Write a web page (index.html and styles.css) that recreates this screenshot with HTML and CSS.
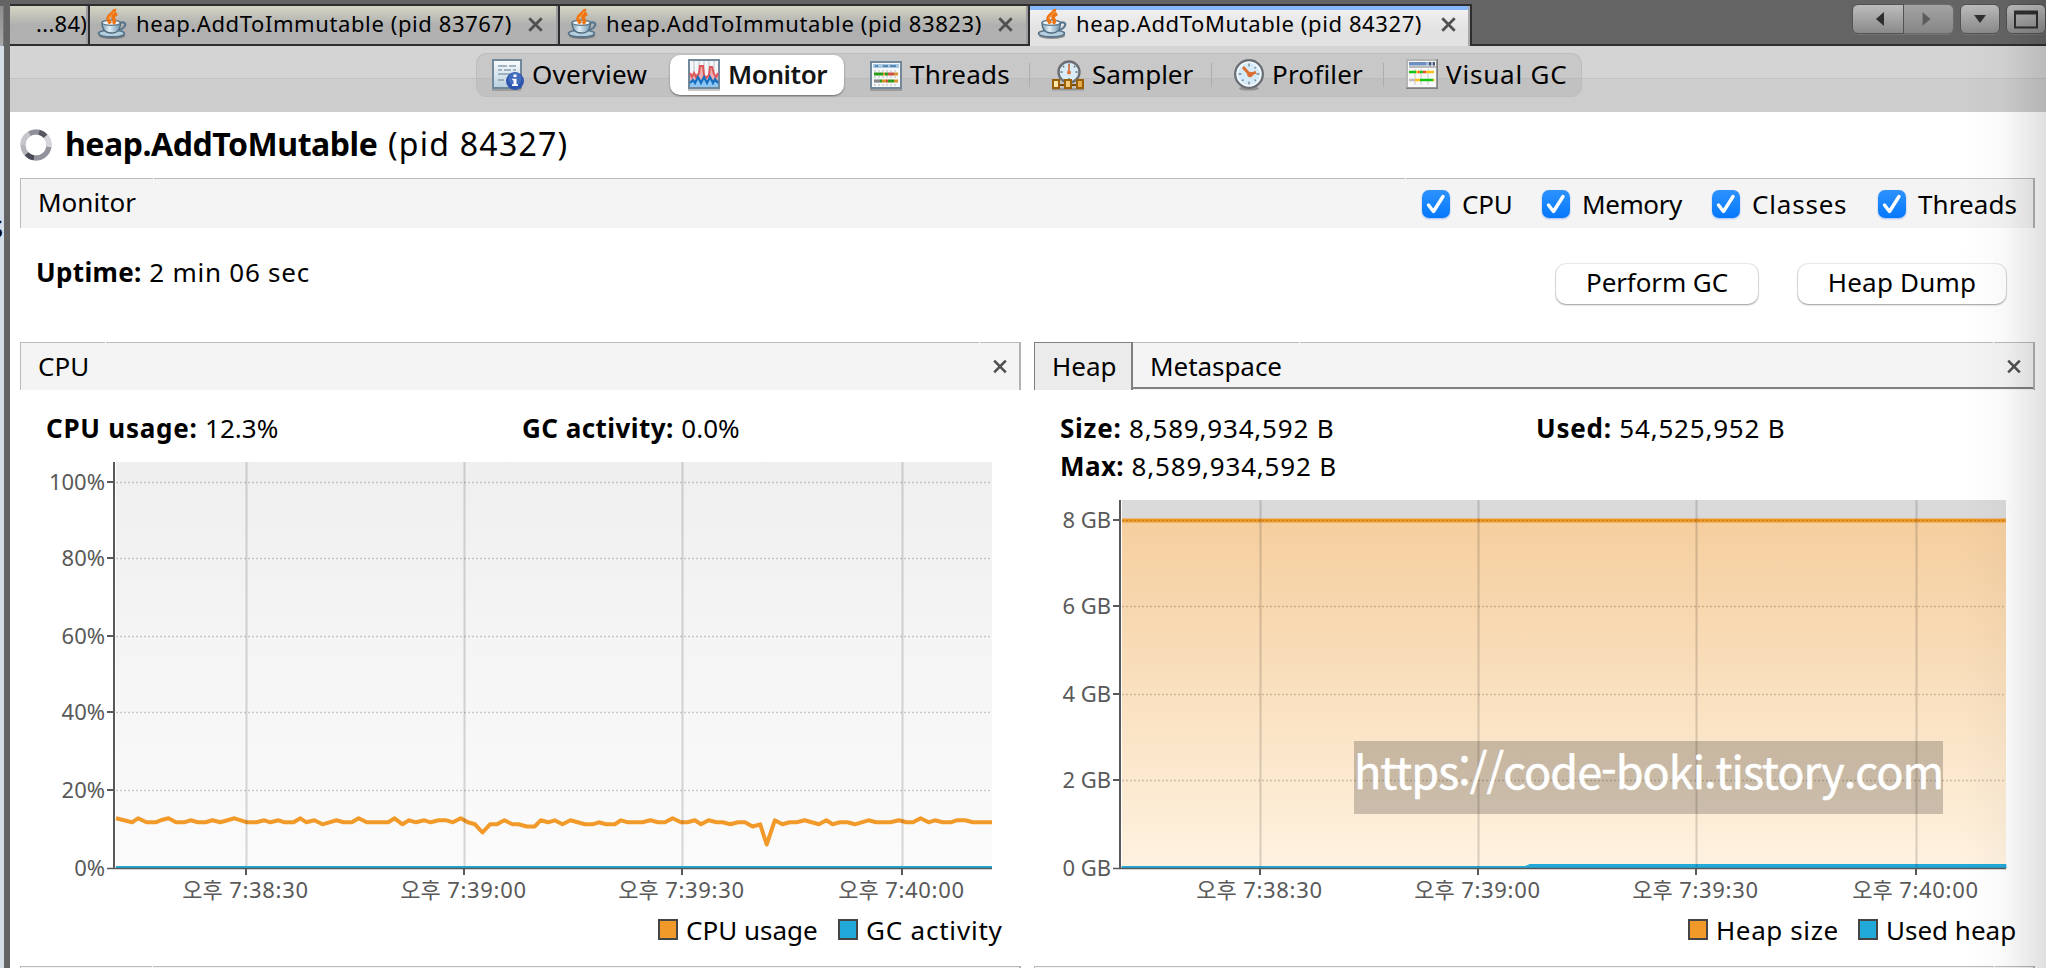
FILE: index.html
```
<!DOCTYPE html>
<html lang="ko">
<head>
<meta charset="utf-8">
<title>VisualVM</title>
<link rel="stylesheet" href="styles.css">
</head>
<body>
<svg class="defs" width="0" height="0" aria-hidden="true">
  <defs>
    <linearGradient id="cup" x1="0" y1="0" x2="1" y2="0">
      <stop offset="0" stop-color="#7f9db2"/><stop offset=".4" stop-color="#e0eef6"/><stop offset="1" stop-color="#6f93ab"/>
    </linearGradient>
    <linearGradient id="doc" x1="0" y1="0" x2="0" y2="1">
      <stop offset="0" stop-color="#fbfdfe"/><stop offset="1" stop-color="#b9cfdf"/>
    </linearGradient>
    <linearGradient id="cpuBg" x1="0" y1="0" x2="0" y2="1">
      <stop offset="0" stop-color="#efefef"/><stop offset="1" stop-color="#fbfbfb"/>
    </linearGradient>
    <linearGradient id="heapFill" x1="0" y1="0" x2="0" y2="1">
      <stop offset="0" stop-color="#f5ce9e"/><stop offset="1" stop-color="#fef2e0"/>
    </linearGradient>
    <linearGradient id="gold" x1="0" y1="0" x2="1" y2="0">
      <stop offset="0" stop-color="#fff0b8"/><stop offset="1" stop-color="#e2a640"/>
    </linearGradient>
    <symbol id="java" viewBox="0 0 30 32">
      <ellipse cx="15" cy="27.800" rx="13" ry="3.200" fill="#444" opacity=".5"/>
      <ellipse cx="14.500" cy="25.500" rx="13" ry="3.400" fill="#b5cedd" stroke="#567389" stroke-width="1.600"/>
      <path d="M22 15.500c5-2.500 7.500 0 5.500 3-1.200 2-3.500 3.200-7 3.500" fill="none" stroke="#5a7890" stroke-width="2.200"/>
      <path d="M5 14.500c0 5.500 2 10.500 9.500 10.500s9-5 9-10.500z" fill="url(#cup)" stroke="#4f6b80" stroke-width="1.300"/>
      <ellipse cx="14.200" cy="14.800" rx="9" ry="2.600" fill="#f0f6fa" stroke="#5d7a8f" stroke-width="1.200"/>
      <path d="M17.500 1c1 4-7 5.500-6.500 10 .2 1.800 1.500 3 2.500 4.500M20 5.500c-4 2.500-5 4-2.800 6.300 1 1.200.2 2.700-1.500 3.700" fill="none" stroke="#ee7413" stroke-width="3.500"/>
      <path d="M17 3.500c0 3-5.500 4.500-5 7.500" fill="none" stroke="#ffb15c" stroke-width="1"/>
    </symbol>
    <symbol id="close" viewBox="0 0 14 14">
      <path d="M1.200 1.200 12.800 12.800M12.800 1.200 1.200 12.800" stroke="#505050" stroke-width="2.600" fill="none"/>
    </symbol>
    <symbol id="check" viewBox="0 0 28 28">
      <path d="M6.500 15l5 6.500L21 6.500" stroke="#fff" stroke-width="3.400" stroke-linecap="round" stroke-linejoin="round" fill="none"/>
    </symbol>
  </defs>
</svg>

<div class="app">
  <aside class="edge"><div class="edge-tab"></div><div class="edge-body"><span>s</span></div></aside>

  <main class="window">
    <header class="tabs">
      <div class="tab tab-cut"><span>...84)</span></div>
      <div class="tab tab-wide"><svg class="java"><use href="#java"/></svg><span>heap.AddToImmutable (pid 83767)</span><svg class="x"><use href="#close"/></svg></div>
      <div class="tab tab-wide"><svg class="java"><use href="#java"/></svg><span>heap.AddToImmutable (pid 83823)</span><svg class="x"><use href="#close"/></svg></div>
      <div class="tab tab-active"><svg class="java"><use href="#java"/></svg><span>heap.AddToMutable (pid 84327)</span><svg class="x"><use href="#close"/></svg></div>
      <div class="tab-rest">
        <div class="nav">
          <div class="pair">
            <button class="nb left"><svg viewBox="0 0 50 28"><path d="M31 7v14L23 14z" fill="#2e2e2e"/></svg></button>
            <button class="nb right"><svg viewBox="0 0 50 28"><path d="M19 7v14l8-7z" fill="#5c5c5c"/></svg></button>
          </div>
          <button class="nb drop"><svg viewBox="0 0 38 28"><path d="M13 10h12l-6 8z" fill="#2e2e2e"/></svg></button>
          <button class="nb max"><svg viewBox="0 0 38 28"><path d="M8 7.500h22v15H8z" fill="none" stroke="#2e2e2e" stroke-width="2"/><path d="M7 5.500h24v4H7z" fill="#2e2e2e"/></svg></button>
        </div>
      </div>
    </header>

    <nav class="toolbar">
      <div class="segments">
        <div class="seg overview">
          <svg viewBox="0 0 32 32">
            <path d="M0 30h29v2H0z" fill="#777" opacity=".5"/>
            <path d="M1 1h28v28H1z" fill="url(#doc)" stroke="#71879a" stroke-width="2"/>
            <path d="M6 7h9M17 7h7M6 11h4M12 11h7M21 11h3M6 15h12M20 15h4M6 21h6" stroke="#8b9eae" stroke-width="1.600"/>
            <circle cx="23" cy="22" r="9" fill="#2d57ae"/><circle cx="23" cy="20" r="6.500" fill="#5078c8" opacity=".65"/>
            <path d="M21.500 15.500h3v2.600h-3zM20.300 19.700h4.200v5.600H26V27h-6v-1.700h1.500v-4h-1.200z" fill="#fff"/>
          </svg>Overview</div>
        <div class="seg monitor">
          <svg viewBox="0 0 32 32">
            <path d="M0 30h32v2H0z" fill="#999" opacity=".55"/>
            <path d="M1 1h30v28H1z" fill="#f4f6f9" stroke="#71879a" stroke-width="2"/>
            <path d="M6 2v24M11 2v24M16 2v24M21 2v24M26 2v24" stroke="#cdd3d9" stroke-width="1.500"/>
            <path d="M2 28V14l3 4 3-4 2 4 2-9 2-2 2 9 3 3 3-10 3 1 2 8 3-2v12z" fill="#eeb0b0"/>
            <path d="M2 14l2 4 2-4 2 4 3-4 1-7h3l1 9 2 3 3-3 1-8h2l2 7 2 3 2-4" fill="none" stroke="#de555a" stroke-width="2"/>
            <path d="M2 28v-5l3-3 3 2 2-4 4 4 3-4 2 5 3-5 3 4 2-2 3 3v5z" fill="#8fc8f4"/>
            <path d="M2 24l3-3 2 3 3-6 3 6 3-6 3 6 3-6 3 6 2-4 3 4" fill="none" stroke="#176fc0" stroke-width="2.200"/>
          </svg>Monitor</div>
        <div class="seg threads">
          <svg viewBox="0 0 32 32">
            <path d="M0 30h32v2H0z" fill="#777" opacity=".5"/>
            <path d="M1 3h30v26H1z" fill="#f5f7f8" stroke="#71879a" stroke-width="2"/>
            <path d="M3 5h26v4H3z" fill="#a8c8e2"/><path d="M5 7h3M13 7h5M20 7h6" stroke="#3a76a8" stroke-width="1.400"/>
            <path d="M4 12h24M4 18h24M4 26h24" stroke="#bbb" stroke-width="1" stroke-dasharray="2 2"/>
            <path d="M4 15h9M15 15h3M10 22h2M18 22h6" stroke="#2c9a1c" stroke-width="3.200"/>
            <path d="M13 15h2M24 15h4M12 22h4M24 22h4" stroke="#d3932a" stroke-width="3.200"/>
            <path d="M18 15h6M16 22h2" stroke="#cc4e40" stroke-width="3.200"/><path d="M4 22h6" stroke="#888" stroke-width="3.200"/>
          </svg>Threads</div>
        <div class="seg sampler">
          <svg viewBox="0 0 32 32">
            <circle cx="17" cy="13" r="10.500" fill="#d8ebf7" stroke="#6b6f74" stroke-width="2.400"/>
            <path d="M17 4.500v2M17 19v2M8.500 13h2M23.500 13h2M11 7l1.200 1.200M23 7l-1.200 1.200" stroke="#5d6d7a" stroke-width="1.300"/>
            <path d="M17 5.500v8" stroke="#d8662a" stroke-width="1.600"/><circle cx="17" cy="13.500" r="2" fill="#e0723a"/>
            <path d="M0 29h32v2.500H0z" fill="#555" opacity=".4"/>
            <path d="M1 21h6v8H1zM13 21h6v8h-6zM25 21h6v8h-6z" fill="url(#gold)" stroke="#9a5e07" stroke-width="2"/>
            <path d="M8 26h4M20 26h4" stroke="#7d4b04" stroke-width="2"/>
          </svg>Sampler</div>
        <div class="seg profiler">
          <svg viewBox="0 0 32 32">
            <ellipse cx="17" cy="29.500" rx="10" ry="2" fill="#555" opacity=".45"/>
            <circle cx="17" cy="15" r="13.800" fill="#d6ebf9" stroke="#6b6f74" stroke-width="2.400"/>
            <circle cx="17" cy="15" r="11.700" fill="none" stroke="#f5fbff" stroke-width="1.500"/>
            <path d="M17 4.500v3M17 22.500v3M6.500 15h3M24.500 15h3M24 22l-1.500-1.500M10 22l1.500-1.500M24 8l-1.500 1.500" stroke="#7b8c9a" stroke-width="1.400"/>
            <path d="M11 8l7 8 6-3" fill="none" stroke="#dd6d32" stroke-width="3"/><circle cx="18" cy="15.500" r="2.800" fill="#dd6d32"/>
          </svg>Profiler</div>
        <div class="seg vgc">
          <svg viewBox="0 0 32 32">
            <path d="M0 0h32v30H0z" fill="#808080"/><path d="M0 0h30.500v28.500H0z" fill="#b5b5b5"/><path d="M2 2h28v26H2z" fill="#f8f8f8"/>
            <path d="M3 3h17v3.500H3z" fill="#6d8fc0"/><path d="M20 3h9v3.500h-9z" fill="#9fb6d8"/><path d="M23 3h2v3.500h-2zM27 3h2v3.500h-2z" fill="#4c5768"/><path d="M3 7h27v2H3z" fill="#bbb"/>
            <path d="M9 10v16M15 10v16M22 10v16" stroke="#ddd" stroke-width="1.600"/>
            <path d="M3 13h7M14 13h3M14 21h13" stroke="#16c416" stroke-width="2.400"/><path d="M10 13h4M20 13h8M9 21h5M27 21h1.500" stroke="#f8c21a" stroke-width="2.400"/>
            <path d="M12 13h1.500M17 13h3" stroke="#f04a3a" stroke-width="2.400"/><path d="M3 21h6" stroke="#bbb" stroke-width="2.400"/>
          </svg>Visual GC</div>
      </div>
    </nav>

    <section class="content">
      <h1 class="title">
        <svg class="spinner" viewBox="0 0 32 32" fill="none" stroke-width="5">
          <circle cx="16" cy="16" r="13" stroke="#b4b5bb"/>
          <path d="M3 16A13 13 0 0 1 9.500 4.700" stroke="#c6c7cb"/>
          <path d="M9.500 4.700A13 13 0 0 1 19 3.300" stroke="#8f9099"/>
          <path d="M19 3.300A13 13 0 0 1 25.700 7.300" stroke="#56575f"/>
          <path d="M25.700 7.300A13 13 0 0 1 28.900 18" stroke="#d5d5d9"/>
          <path d="M28.900 18A13 13 0 0 1 14 28.900" stroke="#92939c"/>
          <path d="M14 28.900A13 13 0 0 1 6.500 24.900" stroke="#484a54"/>
        </svg>
        <b>heap.AddToMutable</b><span>(pid 84327)</span>
      </h1>

      <div class="bar monitor-bar">
        <span class="bar-name">Monitor</span>
        <div class="checks">
          <label class="c1"><i><svg><use href="#check"/></svg></i>CPU</label>
          <label class="c2"><i><svg><use href="#check"/></svg></i>Memory</label>
          <label class="c3"><i><svg><use href="#check"/></svg></i><span class="ls8">Classes</span></label>
          <label class="c4"><i><svg><use href="#check"/></svg></i>Threads</label>
        </div>
      </div>

      <div class="actions">
        <p class="uptime"><b>Uptime:</b> <span>2 min 06 sec</span></p>
        <button class="btn gc">Perform GC</button>
        <button class="btn dump">Heap Dump</button>
      </div>

      <div class="panels">
        <article class="panel">
          <div class="bar head cpu-head"><span class="bar-name">CPU</span><svg class="x"><use href="#close"/></svg></div>
          <div class="stats cpu-stats">
            <p><b>CPU usage:</b> <span class="ls0">12.3%</span></p><p class="gc-stat"><b>GC activity:</b> <span class="ls0">0.0%</span></p>
          </div>
          <svg class="chart" width="1001" height="458" viewBox="20 447 1001 458">
            <rect x="116" y="462" width="876" height="406" fill="url(#cpuBg)"/>
            <polyline class="series" points="116,818.300 132,822.300 138,818.300 146.500,822.300 155.500,822.300 160.700,820.300 168.500,818.300 176,822.300 184,822.300 190.400,820.300 198,822.300 205.400,822.300 212.500,820.300 220.400,822.300 227.500,820.300 234.600,818.300 247,822.300 256.400,822.300 264.300,820.300 270.400,822.300 278.600,820.300 284.600,822.300 293.600,822.300 300.400,818.300 306.400,822.300 314.300,820.300 322.500,824.300 329.300,822.300 336.400,820.300 343.600,822.300 351.800,822.300 358.600,818.300 366.800,822.300 388.200,822.300 394.600,818.300 402.500,824.300 409,820.300 416,822.300 424.300,820.300 430.700,822.300 438.600,820.300 446.400,820.300 452.900,822.300 460.700,818.300 467.900,822.300 475,824.300 482.500,832.500 490,824.300 497,824.300 504.300,820.300 512.500,824.300 518.600,824.300 526.800,826.500 534.600,826.500 540.700,820.300 548,822.300 554.600,820.300 562.400,824.300 570.400,820.300 585,824.300 592.600,824.300 598.700,822.300 606,824.300 614.800,824.300 621,820.300 628,822.300 642.400,822.300 650.400,820.300 658,822.300 665,822.300 672.600,818.300 681,822.300 687.500,822.300 694.800,820.300 701,824.300 708.600,820.300 716.600,822.300 722.700,822.300 730.400,824.300 738,822.300 745,822.300 752.600,826.500 760.200,824.300 766.700,844.500 774.800,820.300 782.400,824.300 789.700,822.300 796.600,822.300 804.600,820.300 818.800,824.300 826.400,820.300 832.600,824.300 839.800,822.300 847.500,822.300 854.800,824.300 868.500,820.300 876.200,822.300 890.400,822.300 899,820.300 906.400,822.300 913,822.300 920.600,818.300 928.600,822.300 934.800,820.300 942.800,822.300 950.800,822.300 956.600,820.300 965,820.300 973,822.300 992,822.300"/>
            <path class="grid-v" d="M246.500 462V867M464.500 462V867M682.500 462V867M902.500 462V867"/>
            <path class="grid-h" d="M116 482.500H992M116 558.500H992M116 636.500H992M116 712.500H992M116 790.500H992"/>
            <path d="M116 867H992" stroke="#21a9d9" stroke-width="2"/>
            <path class="axis" d="M114 462V868.500M107 482H114M107 558H114M107 636H114M107 712H114M107 790H114M246 868V875M464 868V875M682 868V875M902 868V875"/>
            <path d="M107 868.500H992" stroke="#595959" stroke-width="1.300"/>
            <g class="ylab"><text x="105" y="490">100%</text><text x="105" y="566">80%</text><text x="105" y="644">60%</text><text x="105" y="720">40%</text><text x="105" y="798">20%</text><text x="105" y="876">0%</text></g>
            <g class="xlab"><text x="245.500" y="898"><tspan class="ko">오후</tspan> 7:38:30</text><text x="463.500" y="898"><tspan class="ko">오후</tspan> 7:39:00</text><text x="681.500" y="898"><tspan class="ko">오후</tspan> 7:39:30</text><text x="901.500" y="898"><tspan class="ko">오후</tspan> 7:40:00</text></g>
          </svg>
          <div class="legend cpu-legend"><span class="key"><i class="orange"></i>CPU usage</span><span class="key ls8"><i class="blue"></i>GC activity</span></div>
          <div class="bar next next-left"></div>
        </article>

        <article class="panel">
          <div class="bar head heap-head"><span class="heap-tab">Heap</span><span class="meta-tab">Metaspace</span><svg class="x"><use href="#close"/></svg></div>
          <div class="stats heap-stats">
            <p><b>Size:</b> <span>8,589,934,592 B</span></p><p><b>Used:</b> <span>54,525,952 B</span></p>
            <p class="max-stat"><b>Max:</b> <span>8,589,934,592 B</span></p>
          </div>
          <svg class="chart" width="1001" height="420" viewBox="1034 485 1001 420">
            <rect x="1122" y="500" width="884" height="20" fill="#dadada"/>
            <rect x="1122" y="520" width="884" height="348" fill="url(#heapFill)"/>
            <path d="M1122 520.500H2006" stroke="#f29a29" stroke-width="4"/>
            <path d="M1122 866.500H1525l5-2H2006V868H1122z" fill="#21a9d9" stroke="#21a9d9" stroke-width="1"/>
            <path class="grid-v" d="M1260.500 500V867M1478.500 500V867M1696.500 500V867M1916.500 500V867"/>
            <path class="grid-h" d="M1122 520.500H2006M1122 606.500H2006M1122 694.500H2006M1122 780.500H2006"/>
            <path class="axis" d="M1120 500V868.500M1113 520H1120M1113 606H1120M1113 694H1120M1113 780H1120M1260 868V875M1478 868V875M1696 868V875M1916 868V875"/>
            <path d="M1113 868.500H2006" stroke="#595959" stroke-width="1.300"/>
            <g class="ylab"><text x="1111" y="528">8 GB</text><text x="1111" y="614">6 GB</text><text x="1111" y="702">4 GB</text><text x="1111" y="788">2 GB</text><text x="1111" y="876">0 GB</text></g>
            <g class="xlab"><text x="1259.500" y="898"><tspan class="ko">오후</tspan> 7:38:30</text><text x="1477.500" y="898"><tspan class="ko">오후</tspan> 7:39:00</text><text x="1695.500" y="898"><tspan class="ko">오후</tspan> 7:39:30</text><text x="1915.500" y="898"><tspan class="ko">오후</tspan> 7:40:00</text></g>
          </svg>
          <div class="legend heap-legend"><span class="key ls6"><i class="orange"></i>Heap size</span><span class="key"><i class="blue"></i>Used heap</span></div>
          <div class="bar next next-right"></div>
          <div class="watermark">https://code-boki.tistory.com</div>
        </article>
      </div>
    </section>
  </main>
  <div class="shade"></div>
</div>
</body>
</html>
```
FILE: styles.css
```
* { box-sizing: border-box; }
body { margin: 0; background: #fff; color: #000; font: 26px/38px "Noto Sans", "Noto Sans CJK KR", sans-serif; }
p, h1 { margin: 0; }
button { margin: 0; padding: 0; font: inherit; color: inherit; }
svg { display: block; flex: none; }
.defs { position: absolute; }
.app { position: relative; display: flex; width: 2046px; height: 968px; overflow: hidden; }

/* neighbouring window edge */
.edge { flex: none; width: 10px; padding-top: 6px; background: #646464; }
.edge-tab { width: 4px; height: 40px; background: linear-gradient(#8e8e8e, #aaa); border-right: 1px solid #777; }
.edge-body { width: 4px; height: 922px; padding-top: 161px; background: #d5dde7; overflow: hidden; }
.edge-body span { display: block; margin-left: -12px; font-size: 32px; }

.window { width: 2036px; flex: none; }

/* document tabs */
.tabs { display: flex; height: 46px; padding-top: 4px; background: #646464; font-size: 22px; letter-spacing: .6px; }
.tab { display: flex; align-items: center; height: 42px; padding-bottom: 5px; white-space: nowrap; flex: none;
  border: solid #2e2e30; border-width: 2px 2px 2px 0;
  background: linear-gradient(#d5d5c3, #b0b0b0 50%, #b1b1b1); box-shadow: inset -2px 0 #9c9ca0; }
.tab-cut { width: 80px; padding-left: 26px; overflow: hidden; }
.tab-cut span { width: 50px; overflow: hidden; letter-spacing: .3px; }
.tab-wide { width: 470px; padding-left: 6px; }
.tab-active { width: 442px; padding-left: 6px; padding-bottom: 7px; border-bottom: 0; background: linear-gradient(#86b7fb 4px, #f0f0f0 4px, #e2e2e2 60%); box-shadow: inset -2px 0 #a9a9ab; }
.java { width: 30px; height: 32px; margin: 3px 9px 0 1px; }
.tab .x { width: 15px; height: 15px; margin: 3px 0 0 18px; }
.tab-wide span { width: 374px; }
.tab-active span { width: 347px; }
.tab-rest { flex: 1; border-bottom: 2px solid #2e2e30; }
.nav { display: flex; width: 194px; margin-left: auto; }
.pair { display: flex; width: 102px; margin-right: 6px; }
.nb { height: 30px; border: 1px solid #525252; border-radius: 6px; background: linear-gradient(#bcbcbc, #8a8a8a); box-shadow: 0 1px #747474; }
.nb svg { width: 100%; height: 28px; }
.left { width: 52px; border-radius: 6px 0 0 6px; }
.right { width: 50px; border-left: 0; border-radius: 0 6px 6px 0; background: linear-gradient(#a3a3a3, #868686); border-color: #6c6c6c; }
.drop { width: 40px; margin-right: 6px; }
.max { width: 40px; }

/* view switcher */
.toolbar { height: 66px; padding: 7px 0 0 466px; background: linear-gradient(#d4d4d4 32px, #c2c2c2 32px, #c2c2c2 33px, #cdcdcd 33px); }
.segments { display: flex; align-items: center; width: 1106px; height: 44px; border-radius: 11px; background: linear-gradient(#c8c8c8 25px, #bbb 25px, #bbb 26px, #c1c1c1 26px); box-shadow: inset 0 0 0 1px #bdbdbd; letter-spacing: .2px; }
.seg { position: relative; display: flex; align-items: center; gap: 8px; height: 40px; padding-bottom: 2px; white-space: nowrap; }
.seg svg { width: 32px; height: 32px; margin-top: 1px; }
.overview { width: 194px; padding-left: 16px; }
.monitor { width: 174px; padding-left: 18px; border-radius: 10px; background: #fff; box-shadow: 0 1px 2px rgba(0,0,0,.45); font-weight: 600; letter-spacing: -.4px; color: #151515; }
.threads { width: 185px; padding-left: 26px; }
.sampler { width: 182px; padding-left: 23px; letter-spacing: 0; }
.profiler { width: 172px; padding-left: 21px; }
.vgc { width: 199px; padding-left: 23px; letter-spacing: .8px; }
.sampler::before, .profiler::before, .vgc::before { content: ""; position: absolute; left: 0; top: 8px; width: 1px; height: 24px; background: #adadad; }

.content { padding-left: 10px; }
.title { display: flex; align-items: center; height: 66px; padding-bottom: 2px; font-size: 32px; font-weight: 400; }
.spinner { width: 32px; height: 32px; margin: 1px 13px 0 0; }
.title b { width: 323px; letter-spacing: -.45px; }
.title span { letter-spacing: 1.25px; }

.bar { display: flex; align-items: center; background: #f4f4f4; border: 1px solid #bababa; border-right: 2px solid #b2b2b2; border-bottom: 0; }
.bar-name { padding-left: 17px; }
.monitor-bar { position: relative; width: 2015px; height: 50px; }
.monitor-bar .bar-name { margin-top: -3px; }
/* one-pixel seams where the header segments join */
.monitor-bar::before, .monitor-bar::after, .cpu-head::before, .cpu-head::after, .heap-head::before, .heap-head::after, .next::after { content: ""; position: absolute; top: -1px; width: 1px; height: 1px; background: #fff; }
.head, .next { position: relative; }
.monitor-bar::before { left: 132px; }
.monitor-bar::after { left: 1384px; }
.cpu-head::before { left: 84px; }
.cpu-head::after { left: 958px; }
.heap-head::before { left: 265px; }
.heap-head::after { left: 959px; }
.next-left::after { left: 131px; }
.next-right::after { left: 959px; }
.checks { display: flex; margin-left: auto; }
.checks label { display: flex; align-items: center; gap: 12px; }
.checks i { width: 28px; height: 28px; border-radius: 7px; background: linear-gradient(#2e92ff, #0478fb); box-shadow: 0 1px 2px rgba(0,90,255,.35); }
.checks svg { width: 28px; height: 28px; }
.c1 { width: 120px; letter-spacing: -.2px; }
.c2 { width: 170px; letter-spacing: -.4px; }
.c3 { width: 166px; }
.c4 { width: 155px; letter-spacing: .1px; }
.ls8 { letter-spacing: .8px; }
.ls6 { letter-spacing: .6px; }

.actions { display: flex; align-items: flex-start; width: 2014px; height: 114px; padding: 25px 0 0 16px; }
.uptime { flex: 1; letter-spacing: .75px; }
.uptime b { letter-spacing: .35px; }
.btn { height: 40px; margin-top: 11px; padding-bottom: 4px; border: 0; border-radius: 10px; background: #fff; box-shadow: 0 0 0 1px rgba(0,0,0,.07), 0 1px 2px rgba(0,0,0,.35); line-height: 34px; }
.gc { width: 202px; margin-right: 40px; letter-spacing: -.1px; }
.dump { width: 208px; margin-right: 28px; letter-spacing: .2px; }

.panels { display: grid; grid-template-columns: 1001px 1001px; gap: 13px; }
.panel { position: relative; }
.head { height: 48px; }
.cpu-head .bar-name { margin-top: -2px; }
.head .x { width: 14px; height: 15px; margin: 0 12px 0 auto; }
.heap-head { border-left: 0; align-items: stretch; }
.heap-tab { width: 99px; padding-left: 17px; line-height: 46px; margin-top: -1px; border: solid #808080; border-width: 1px 2px 0 1px; background: #ebebeb; }
.meta-tab { flex: 1; padding-left: 17px; line-height: 46px; border-bottom: 2px solid #808080; height: 46px; letter-spacing: -.05px; }
.heap-head .x { width: 39px; height: 46px; margin: 0; padding: 16px 12px 13px 13px; border-bottom: 2px solid #808080; }

.stats { display: grid; grid-template-columns: 476px auto; padding: 19px 0 0 26px; letter-spacing: .8px; }
.stats b { letter-spacing: .75px; }
.stats .ls0 { letter-spacing: 0; }
.gc-stat b { letter-spacing: .45px; }
.max-stat b { letter-spacing: .4px; }

.series { fill: none; stroke: #f29a29; stroke-width: 4; stroke-linejoin: round; }
.grid-v { stroke: #000; stroke-opacity: .15; stroke-width: 2; }
.grid-h { stroke: #000; stroke-opacity: .18; stroke-width: 1.600; stroke-dasharray: 2 2; }
.axis { fill: none; stroke: #595959; stroke-width: 2; }
.chart text { fill: #595959; font-size: 22px; }
.ylab { text-anchor: end; }
.xlab { text-anchor: middle; letter-spacing: .7px; }
.ko { font-family: "Noto Sans CJK KR", sans-serif; letter-spacing: 0; }

.legend { display: flex; height: 61px; padding-top: 5px; }
.cpu-legend { padding-left: 638px; }
.heap-legend { padding-left: 654px; }
.key { display: flex; height: 40px; align-items: center; }
.key:first-child { width: 180px; }
.heap-legend .key:first-child { width: 170px; }
.key i { width: 20px; height: 21px; margin: 0 8px 2px 0; border: 2px solid #454545; }
.key .orange { background: #f29a29; }
.key .blue { background: #21a9d9; }
.next { height: 20px; }

.watermark { position: absolute; left: 320px; top: 399px; width: 589px; height: 73px; background: rgba(0,0,0,.2); color: #fff; font: 45px/57px "Noto Sans CJK KR", sans-serif; letter-spacing: -1px; white-space: nowrap; -webkit-text-stroke: .5px #fff; }
.shade { position: absolute; right: 0; top: 0; width: 84px; height: 968px; background: linear-gradient(90deg, rgba(0,0,0,0), rgba(0,0,0,.025) 50%, rgba(0,0,0,.12)); }
```
